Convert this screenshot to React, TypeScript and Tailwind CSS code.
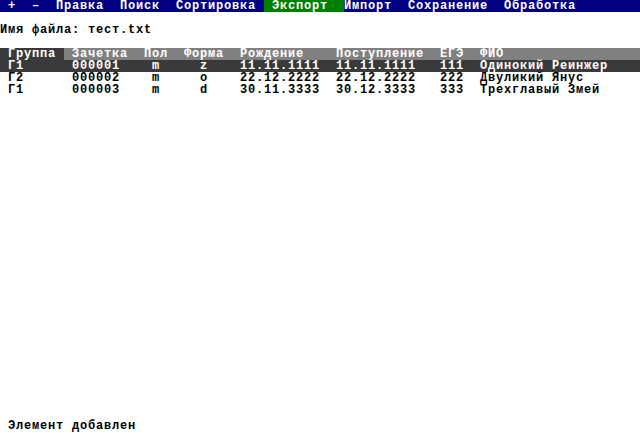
import React from 'react';

const menu = [
  { label: '+', w: 'w-[24px]' },
  { label: '–', w: 'w-[24px]' },
  { label: 'Правка', w: 'w-[64px]' },
  { label: 'Поиск', w: 'w-[56px]' },
  { label: 'Сортировка', w: 'w-[88px]' },
];

const menuRight = [
  { label: 'Импорт', w: 'w-[64px]' },
  { label: 'Сохранение', w: 'w-[96px]' },
  { label: 'Обработка', w: 'flex-1' },
];

const rows = [
  ['Г1', '000001', 'm', 'z', '11.11.1111', '11.11.1111', '111', 'Одинокий Реинжер'],
  ['Г2', '000002', 'm', 'o', '22.12.2222', '22.12.2222', '222', 'Двуликий Янус'],
  ['Г1', '000003', 'm', 'd', '30.11.3333', '30.12.3333', '333', 'Трехглавый Змей'],
];

// column cells, widths in 8px character cells
const cols = ['w-[64px] pl-[8px]', 'w-[80px] pl-[8px]', 'w-[40px] pl-[8px]', 'w-[56px] pl-[16px]', 'w-[96px]', 'w-[104px]', 'w-[40px]', 'flex-1'];
const headCols = ['w-[80px] pl-[8px]', 'w-[40px]', 'w-[56px]', 'w-[96px]', 'w-[104px]', 'w-[40px]', 'flex-1'];
const headers = ['Зачетка', 'Пол', 'Форма', 'Рождение', 'Поступление', 'ЕГЭ', 'ФИО'];

export default function App() {
  return (
    <div className="flex h-[433px] w-[640px] flex-col overflow-hidden bg-white font-['Liberation_Mono',monospace] text-[12px] font-bold leading-[12px] tracking-[0.8px] whitespace-pre text-black">
      <div className="flex h-[12px] items-center bg-[#000080] text-white">
        <span className="w-[8px]" />
        {menu.map((m) => (
          <span key={m.label} className={m.w}>{m.label}</span>
        ))}
        <span className="w-[80px] bg-[#008000] pl-[8px]">Экспорт</span>
        {menuRight.map((m) => (
          <span key={m.label} className={m.w}>{m.label}</span>
        ))}
      </div>
      <div className="h-[12px]" />
      <div className="h-[12px]">Имя файла: тест.txt</div>
      <div className="h-[12px]" />

      <div className="flex h-[12px] text-white">
        <span className="w-[64px] bg-[#3a3a3a] pl-[8px]">Группа</span>
        <div className="flex flex-1 bg-[#808080]">
          {headers.map((h, i) => (
            <span key={h} className={headCols[i]}>{h}</span>
          ))}
        </div>
      </div>
      {rows.map((r, ri) => (
        <div key={ri} className={`flex h-[12px] ${ri === 0 ? 'bg-[#3a3a3a] text-white' : ''}`}>
          {r.map((c, ci) => (
            <span key={ci} className={cols[ci]}>{c}</span>
          ))}
        </div>
      ))}

      <div className="flex-1" />
      <div className="h-[13px] pl-[8px]">Элемент добавлен</div>
    </div>
  );
}
